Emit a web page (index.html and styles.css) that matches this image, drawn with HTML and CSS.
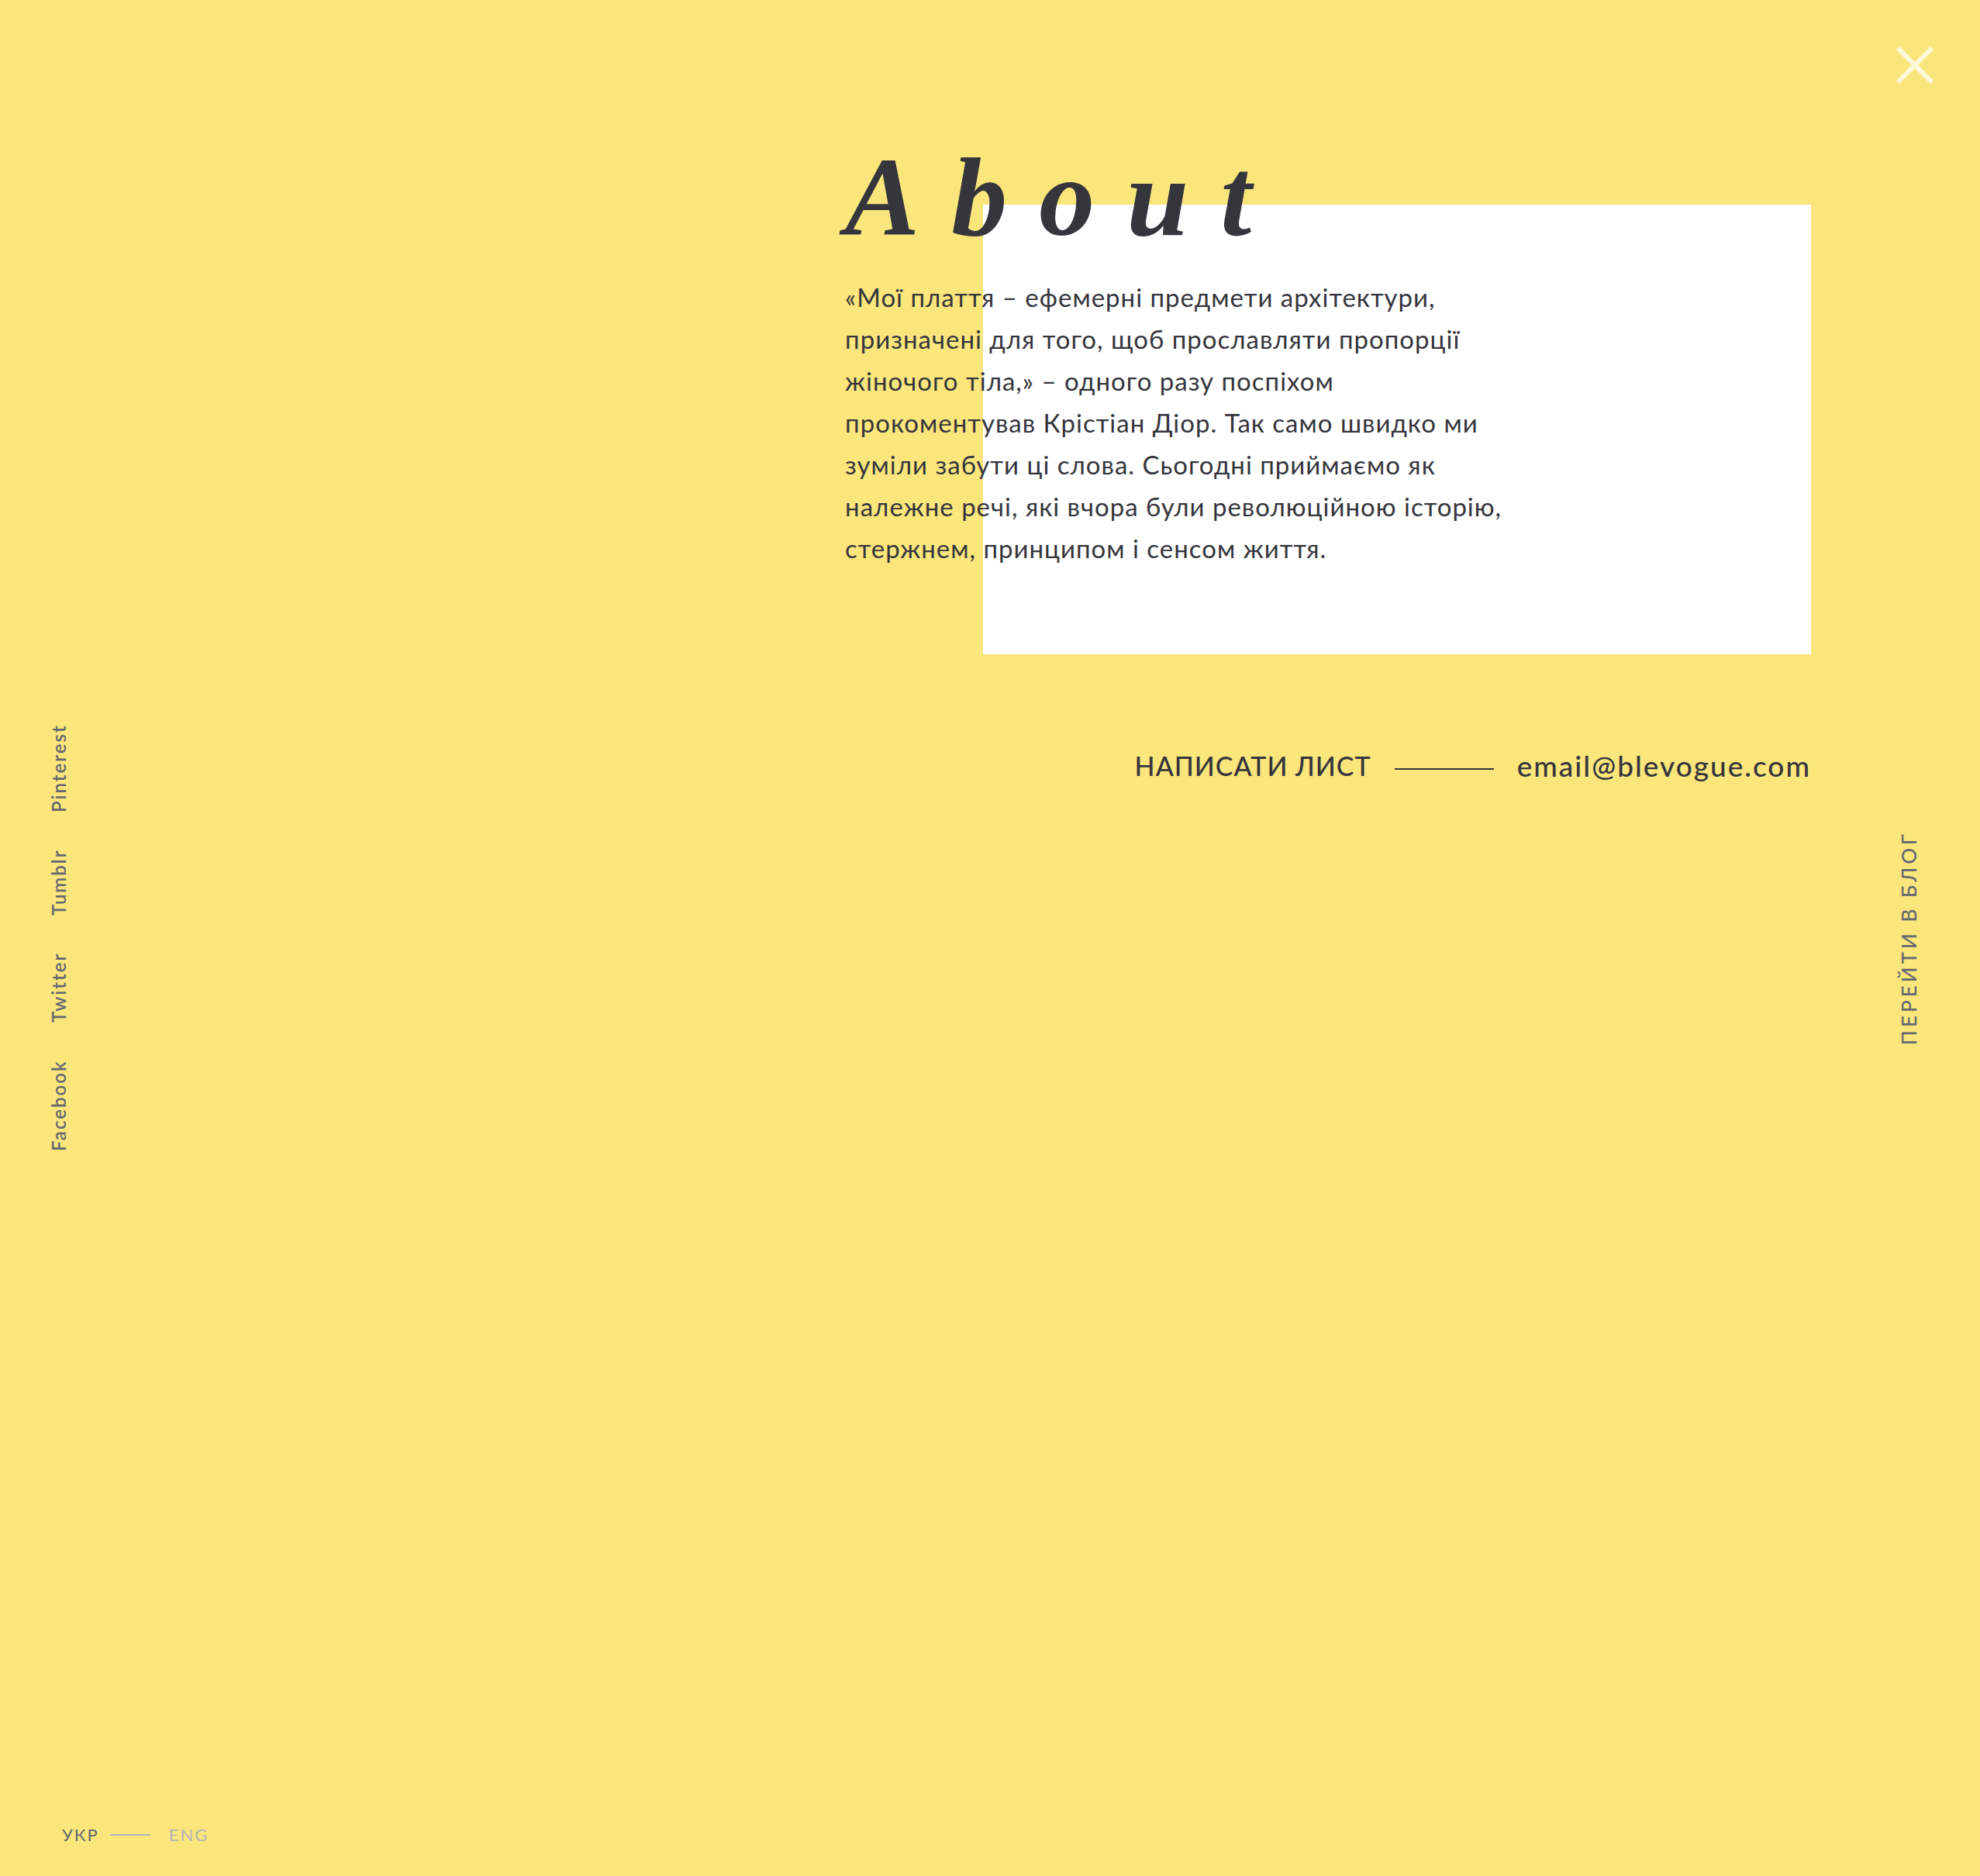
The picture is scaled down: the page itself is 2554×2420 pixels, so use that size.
FILE: index.html
```html
<!DOCTYPE html>
<html lang="uk">
<head>
<meta charset="utf-8">
<meta name="viewport" content="width=device-width, initial-scale=1">
<title>About</title>
<link rel="stylesheet" href="styles.css">
</head>
<body>
<div class="page">
  <aside class="side side-left">
    <nav class="social" aria-label="Соцмережі">
      <a href="#">Facebook</a>
      <a href="#">Twitter</a>
      <a href="#">Tumblr</a>
      <a href="#">Pinterest</a>
    </nav>
    <nav class="lang" aria-label="Мова">
      <a class="lang-current" href="#">УКР</a>
      <span class="lang-line"></span>
      <a href="#">ENG</a>
    </nav>
  </aside>
  <main class="main">
    <section class="about">
      <div class="about-panel"></div>
      <div class="about-content">
        <h1 class="title">About</h1>
        <p class="text">«Мої плаття – ефемерні предмети архітектури,<br>призначені для того, щоб прославляти пропорції<br>жіночого тіла,» – одного разу поспіхом<br>прокоментував Крістіан Діор. Так само швидко ми<br>зуміли забути ці слова. Сьогодні приймаємо як<br>належне речі, які вчора були революційною історію,<br>стержнем, принципом і сенсом життя.</p>
      </div>
    </section>
    <div class="contact">
      <span class="contact-label">НАПИСАТИ ЛИСТ</span>
      <span class="contact-line"></span>
      <a class="contact-mail" href="mailto:email@blevogue.com">email@blevogue.com</a>
    </div>
  </main>
  <aside class="side side-right">
    <button class="close" type="button" aria-label="Закрити">
      <svg viewBox="0 0 48 48" width="48" height="48"><path d="M2 2L46 46M46 2L2 46" stroke="#fff" stroke-opacity=".74" stroke-width="6" fill="none"/></svg>
    </button>
    <a class="blog" href="#">ПЕРЕЙТИ В БЛОГ</a>
  </aside>
</div>
</body>
</html>
```
FILE: styles.css
```css
* { box-sizing: border-box; }

body {
  margin: 0;
  background: #fbe67c;
  color: #35353c;
  font-family: Lato, "Open Sans", sans-serif;
}

a { color: inherit; text-decoration: none; }

.page {
  display: grid;
  grid-template-columns: 35fr 40fr 7fr;
  min-height: 100vh;
}

.side {
  display: flex;
  flex-direction: column;
  color: #656771;
}

.side-left {
  align-items: flex-start;
  padding-left: 62px;
}

.social {
  display: flex;
  gap: 48px;
  margin: auto 0;
  writing-mode: vertical-rl;
  transform: rotate(180deg);
  font-size: 24px;
  font-weight: 600;
  line-height: 28px;
  letter-spacing: 2px;
}

.lang {
  display: flex;
  align-items: center;
  height: 78px;
  margin-top: -78px;
  padding: 0 0 28px 18px;
  font-size: 22px;
  line-height: 28px;
  letter-spacing: 2px;
  color: #b4b3ba;
}

.lang-current {
  color: #656771;
}

.lang-line {
  width: 52px;
  height: 2px;
  margin: 0 24px 0 14px;
  background: currentColor;
}

.main { padding-top: 176px; }

.about {
  display: grid;
  grid-template-columns: 1fr 6fr;
  grid-template-rows: 88px auto;
}

.about-panel {
  grid-column: 2;
  grid-row: 2;
  background: #fff;
}

.about-content {
  grid-column: 1 / 3;
  grid-row: 1 / 3;
  padding-bottom: 110px;
}

.title {
  margin: 0 0 22px;
  font-family: "Liberation Serif", serif;
  font-size: 144px;
  font-style: italic;
  font-weight: 700;
  line-height: 158px;
  letter-spacing: 41px;
}

.text {
  margin: 0;
  font-size: 33px;
  line-height: 54px;
  letter-spacing: 1px;
}

.contact {
  display: flex;
  align-items: center;
  justify-content: flex-end;
  gap: 30px;
  margin-top: 120px;
  font-size: 34px;
  font-weight: 500;
  line-height: 48px;
  letter-spacing: 1px;
}

.contact-line {
  width: 128px;
  height: 2px;
  margin-top: 8px;
  background: currentColor;
}

.contact-mail {
  font-size: 37px;
  letter-spacing: 2px;
}

.side-right {
  align-items: flex-end;
  padding: 60px 60px 60px 0;
}

.close {
  width: 48px;
  height: 48px;
  margin-bottom: -48px;
  padding: 0;
  border: 0;
  background: none;
  cursor: pointer;
}

.close svg { display: block; }

.blog {
  margin: auto 16px auto 0;
  writing-mode: vertical-rl;
  transform: rotate(180deg);
  font-size: 26px;
  font-weight: 500;
  line-height: 32px;
  letter-spacing: 4px;
}
```
